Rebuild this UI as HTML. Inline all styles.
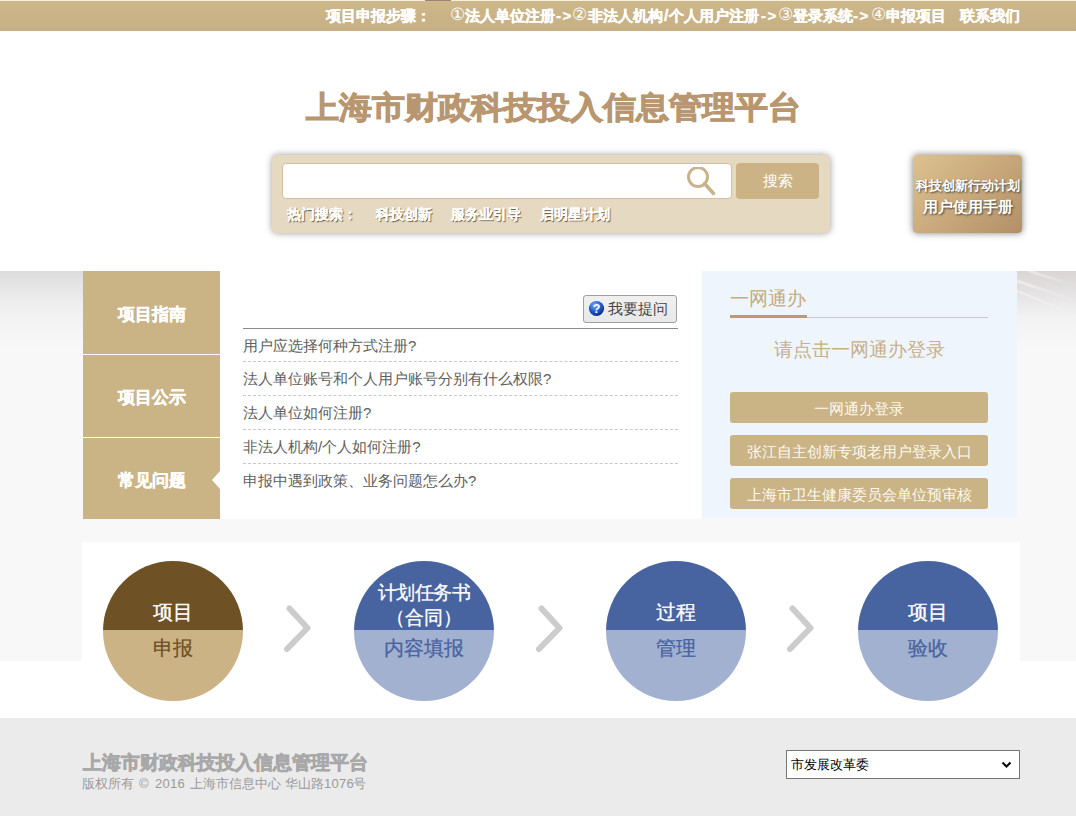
<!DOCTYPE html>
<html><head><meta charset="utf-8">
<style>
*{margin:0;padding:0;box-sizing:border-box}
html,body{width:1076px;height:816px;overflow:hidden;background:#fff;font-family:"Liberation Sans",sans-serif}
.abs{position:absolute}
#topbar{left:0;top:1px;width:1076px;height:30px;background:linear-gradient(#cdb88a,#c7b084);color:#fff;font-weight:bold;font-size:15px;line-height:30px;white-space:nowrap}
#topbar span{top:0;-webkit-text-stroke:0.35px #fff}
#title{left:0;top:85px;width:1076px;text-align:center;font-size:33px;font-weight:bold;color:#b8966f;line-height:46px;padding-left:31px;-webkit-text-stroke:1px #b8966f;transform:scaleY(0.94);transform-origin:50% 22px}
#sbox{left:272px;top:155px;width:558px;height:78px;background:#e5d9c1;border-radius:5px;box-shadow:0 0 7px rgba(0,0,0,.4)}
#sinput{left:10px;top:8px;width:450px;height:36px;background:#fff;border:1px solid #d2c09a;border-radius:4px}
#sbtn{left:464px;top:8px;width:83px;height:36px;background:#cbb385;border-radius:4px;color:#fff;font-size:15px;text-align:center;line-height:36px}
#hot{left:15px;top:50px;font-size:14px;font-weight:bold;color:#fff;text-shadow:1px 1px 1px #5b4b33;-webkit-text-stroke:0.25px #fff;white-space:nowrap;line-height:18px}
#manual{left:913px;top:155px;width:109px;height:78px;border-radius:4px;background:linear-gradient(135deg,#dcc290 0%,#c9a97b 50%,#b38f67 100%);box-shadow:0 0 7px rgba(0,0,0,.5);color:#fff;text-align:center;text-shadow:1px 1px 2px #444}
#bg{left:0;top:271px;width:1076px;height:390px;background:linear-gradient(180deg,#dcdcdc 0px,#e4e4e4 12px,#eeeeee 32px,#f4f4f4 55px,#f8f8f8 80px,#f8f8f8 100%)}
#tabs{left:83px;top:271px;width:137px;height:248px;background:#fff}
.tab{position:absolute;left:0;width:137px;background:#cab385;color:#fff;font-weight:bold;font-size:17px;text-align:center;-webkit-text-stroke:0.4px #fff;padding-top:2px}
#content{left:220px;top:271px;width:482px;height:248px;background:#fff}
#panel{left:702px;top:271px;width:315px;height:247px;background:#eff5fd}
.faq{position:absolute;left:23px;width:435px;height:34px;font-size:15px;color:#606060;line-height:34px;white-space:nowrap}
.pbtn{position:absolute;left:28px;width:258px;height:31px;background:#cab385;border-radius:3px;color:#fdf9ef;font-size:15px;text-align:center;line-height:33px;white-space:nowrap}
#steps{left:82px;top:542px;width:938px;height:176px;background:#fff}
#white2{left:0;top:661px;width:1076px;height:57px;background:#fff}
.circ{position:absolute;top:561px;width:140px;height:140px;border-radius:50%;overflow:hidden}
.circ .t{position:absolute;left:0;top:0;width:140px;height:69px}
.circ .b{position:absolute;left:0;top:69px;width:140px;height:71px}
.circ div.abs{-webkit-text-stroke:0.3px currentColor}
#footer{left:0;top:718px;width:1076px;height:98px;background:#ebebeb}
</style></head><body>
<div class="abs" style="left:0;top:0;width:1076px;height:1px;background:#f6efe0"></div>
<div class="abs" style="left:425px;top:0;width:26px;height:1px;background:#a08470"></div>
<div id="topbar" class="abs">
  <span class="abs" style="left:326px">项目申报步骤：</span>
  <span class="abs" style="left:450px;-webkit-text-stroke:0;font-weight:normal;font-size:17px;top:-1px">①</span>
  <span class="abs" style="left:465px">法人单位注册</span>
  <span class="abs" style="left:556px;letter-spacing:1.5px">-&gt;</span>
  <span class="abs" style="left:572px;-webkit-text-stroke:0;font-weight:normal;font-size:17px;top:-1px">②</span>
  <span class="abs" style="left:588px">非法人机构</span>
  <span class="abs" style="left:664px;font-size:16px">/</span>
  <span class="abs" style="left:669px">个人用户注册</span>
  <span class="abs" style="left:761px;letter-spacing:1.5px">-&gt;</span>
  <span class="abs" style="left:778px;-webkit-text-stroke:0;font-weight:normal;font-size:17px;top:-1px">③</span>
  <span class="abs" style="left:793px">登录系统</span>
  <span class="abs" style="left:853px;letter-spacing:1.5px">-&gt;</span>
  <span class="abs" style="left:871px;-webkit-text-stroke:0;font-weight:normal;font-size:17px;top:-1px">④</span>
  <span class="abs" style="left:886px">申报项目</span>
  <span class="abs" style="left:960px">联系我们</span>
</div>
<div id="title" class="abs">上海市财政科技投入信息管理平台</div>
<div id="sbox" class="abs">
  <div id="sinput" class="abs">
    <svg class="abs" style="left:400px;top:3px" width="36" height="30" viewBox="0 0 36 30"><circle cx="15" cy="10" r="9.5" fill="none" stroke="#c8b38a" stroke-width="3"/><line x1="21.5" y1="16.5" x2="30.5" y2="26.5" stroke="#c8b38a" stroke-width="3.5" stroke-linecap="round"/></svg>
  </div>
  <div id="sbtn" class="abs">搜索</div>
  <div id="hot" class="abs"><span style="color:#f3ead8">热门搜索：</span><span class="abs" style="left:89px">科技创新</span><span class="abs" style="left:164px">服务业引导</span><span class="abs" style="left:253px">启明星计划</span></div>
</div>
<div id="manual" class="abs">
  <div class="abs" style="left:0;top:23px;width:109px;font-size:13px;line-height:16px;font-weight:bold">科技创新行动计划</div>
  <div class="abs" style="left:0;top:43px;width:109px;font-size:15px;line-height:18px;font-weight:bold">用户使用手册</div>
</div>

<div id="bg" class="abs"></div>
<svg class="abs" style="left:1017px;top:271px" width="59" height="80" viewBox="0 0 59 80"><defs><linearGradient id="fd" x1="0" y1="0" x2="0" y2="1"><stop offset="0" stop-color="#fff" stop-opacity=".45"/><stop offset="1" stop-color="#fff" stop-opacity="0"/></linearGradient><linearGradient id="tint" x1="0" y1="0" x2="0" y2="1"><stop offset="0" stop-color="#d8cfcf" stop-opacity=".5"/><stop offset="1" stop-color="#d8cfcf" stop-opacity="0"/></linearGradient></defs><rect width="59" height="45" fill="url(#tint)"/><path d="M0,10 L59,30" stroke="url(#fd)" stroke-width="3"/><path d="M0,20 L59,44" stroke="url(#fd)" stroke-width="2"/><path d="M12,0 L59,15" stroke="url(#fd)" stroke-width="2.5"/></svg>

<div id="tabs" class="abs">
  <div class="tab" style="top:0;height:83px;line-height:83px">项目指南</div>
  <div class="tab" style="top:84px;height:82px;line-height:82px">项目公示</div>
  <div class="tab" style="top:167px;height:81px;line-height:81px">常见问题</div>
</div>
<svg class="abs" style="left:212px;top:471px" width="8" height="18" viewBox="0 0 8 18"><polygon points="8,0 0,9 8,18" fill="#fff"/></svg>
<div id="content" class="abs">
  <div class="abs" style="left:363px;top:24px;width:94px;height:28px;background:linear-gradient(#f0f0f0,#e8e8e8);border:1px solid #a0a0a0;border-radius:3px;font-size:15px;color:#444;line-height:26px;white-space:nowrap">
    <svg class="abs" style="left:4px;top:4px" width="17" height="17" viewBox="0 0 17 17"><defs><radialGradient id="qg" cx="40%" cy="30%" r="70%"><stop offset="0" stop-color="#7fb0ff"/><stop offset="0.6" stop-color="#1e55c8"/><stop offset="1" stop-color="#0b2f8a"/></radialGradient></defs><circle cx="8.5" cy="8.5" r="7.6" fill="url(#qg)"/><text x="8.5" y="13" font-size="12.5" font-weight="bold" fill="#fff" text-anchor="middle" font-family="Liberation Sans">?</text></svg>
    <span class="abs" style="left:24px;top:0">我要提问</span>
  </div>
  <div class="abs" style="left:23px;top:57px;width:435px;height:1px;background:#8c8c8c"></div>
  <div class="faq" style="top:58px">用户应选择何种方式注册?</div>
  <div class="abs" style="left:23px;top:90px;width:435px;border-top:1px dashed #c8c8c8"></div>
  <div class="faq" style="top:91px">法人单位账号和个人用户账号分别有什么权限?</div>
  <div class="abs" style="left:23px;top:124px;width:435px;border-top:1px dashed #c8c8c8"></div>
  <div class="faq" style="top:125px">法人单位如何注册?</div>
  <div class="abs" style="left:23px;top:158px;width:435px;border-top:1px dashed #c8c8c8"></div>
  <div class="faq" style="top:159px">非法人机构/个人如何注册?</div>
  <div class="abs" style="left:23px;top:192px;width:435px;border-top:1px dashed #c8c8c8"></div>
  <div class="faq" style="top:193px">申报中遇到政策、业务问题怎么办?</div>
</div>
<div id="panel" class="abs">
  <div class="abs" style="left:28px;top:14px;font-size:19px;color:#c5ab80;line-height:28px;white-space:nowrap">一网通办</div>
  <div class="abs" style="left:28px;top:46px;width:258px;height:1px;background:#c9c9d2"></div>
  <div class="abs" style="left:28px;top:44px;width:77px;height:3px;background:#b99a72"></div>
  <div class="abs" style="left:0;top:64px;width:315px;text-align:center;font-size:19px;color:#c8b08a;line-height:30px;white-space:nowrap">请点击一网通办登录</div>
  <div class="pbtn" style="top:121px">一网通办登录</div>
  <div class="pbtn" style="top:164px">张江自主创新专项老用户登录入口</div>
  <div class="pbtn" style="top:207px">上海市卫生健康委员会单位预审核</div>
</div>

<div id="white2" class="abs"></div>
<div id="steps" class="abs"></div>
<div class="circ" style="left:103px">
  <div class="t" style="background:#6f5126"></div><div class="b" style="background:#cbb385"></div>
  <div class="abs" style="left:0;top:38px;width:140px;text-align:center;color:#fff;font-size:20px;line-height:26px">项目</div>
  <div class="abs" style="left:0;top:74px;width:140px;text-align:center;color:#6f5126;font-size:20px;line-height:26px">申报</div>
</div>
<div class="circ" style="left:354px">
  <div class="t" style="background:#4864a0"></div><div class="b" style="background:#a3b1d1"></div>
  <div class="abs" style="left:0;top:19px;width:140px;text-align:center;color:#fff;font-size:19px;line-height:25px"><span style="letter-spacing:-0.6px">计划任务书</span><br>（合同）</div>
  <div class="abs" style="left:0;top:74px;width:140px;text-align:center;color:#4864a0;font-size:20px;line-height:26px">内容填报</div>
</div>
<div class="circ" style="left:606px">
  <div class="t" style="background:#4864a0"></div><div class="b" style="background:#a3b1d1"></div>
  <div class="abs" style="left:0;top:38px;width:140px;text-align:center;color:#fff;font-size:20px;line-height:26px">过程</div>
  <div class="abs" style="left:0;top:74px;width:140px;text-align:center;color:#4864a0;font-size:20px;line-height:26px">管理</div>
</div>
<div class="circ" style="left:858px">
  <div class="t" style="background:#4864a0"></div><div class="b" style="background:#a3b1d1"></div>
  <div class="abs" style="left:0;top:38px;width:140px;text-align:center;color:#fff;font-size:20px;line-height:26px">项目</div>
  <div class="abs" style="left:0;top:74px;width:140px;text-align:center;color:#4864a0;font-size:20px;line-height:26px">验收</div>
</div>
<svg class="abs" style="left:280px;top:600px" width="36" height="57" viewBox="0 0 36 57"><polyline points="9.5,8.5 27.5,28 7,49" fill="none" stroke="#cccccc" stroke-width="6" stroke-linecap="round" stroke-linejoin="round"/></svg>
<svg class="abs" style="left:532px;top:600px" width="36" height="57" viewBox="0 0 36 57"><polyline points="9.5,8.5 27.5,28 7,49" fill="none" stroke="#cccccc" stroke-width="6" stroke-linecap="round" stroke-linejoin="round"/></svg>
<svg class="abs" style="left:783px;top:600px" width="36" height="57" viewBox="0 0 36 57"><polyline points="9.5,8.5 27.5,28 7,49" fill="none" stroke="#cccccc" stroke-width="6" stroke-linecap="round" stroke-linejoin="round"/></svg>

<div id="footer" class="abs">
  <div class="abs" style="left:83px;top:33px;font-size:18.7px;-webkit-text-stroke:0.7px #a8a8a8;font-weight:bold;color:#a9a9a9;line-height:24px;white-space:nowrap">上海市财政科技投入信息管理平台</div>
  <div class="abs" style="left:0;top:57px;width:400px;height:18px;font-size:13px;color:#9a9a9a;line-height:18px;white-space:nowrap">
    <span class="abs" style="left:82px">版权所有</span><span class="abs" style="left:139px">©</span><span class="abs" style="left:155px;letter-spacing:0.3px">2016</span><span class="abs" style="left:190px">上海市信息中心</span><span class="abs" style="left:285px">华山路</span><span class="abs" style="left:324px;letter-spacing:0.3px">1076</span><span class="abs" style="left:353px">号</span>
  </div>
  <div class="abs" style="left:786px;top:32px;width:234px;height:29px;background:#fff;border:1px solid #767676;font-size:13px;color:#000;line-height:27px;padding-left:4px;white-space:nowrap">市发展改革委
    <svg class="abs" style="left:214px;top:10px" width="11" height="8" viewBox="0 0 11 8"><polyline points="1.5,1.5 5.5,5.5 9.5,1.5" fill="none" stroke="#000" stroke-width="2"/></svg>
  </div>
</div>
</body></html>
